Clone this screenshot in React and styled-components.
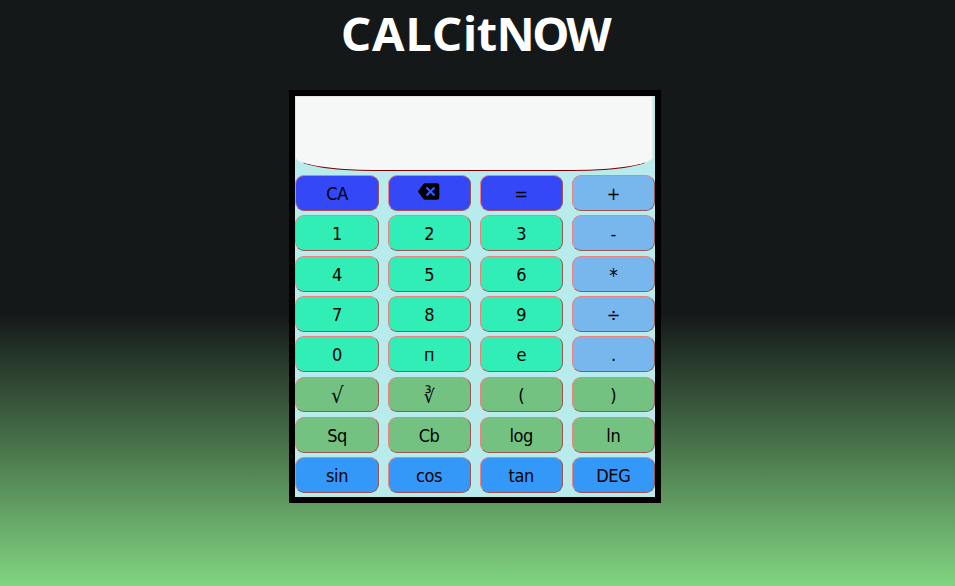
import React from "react";
import styled, { createGlobalStyle } from "styled-components";

const GlobalStyle = createGlobalStyle`
  html { height: 100%; }
  body {
    margin: 0;
    height: 586px;
    overflow: hidden;
    background: linear-gradient(#141819 53.5%, #80d480);
  }
`;

const Page = styled.main`
  display: flex;
  flex-direction: column;
  align-items: center;
  width: 950px;
`;

const Title = styled.h1`
  margin: 0;
  height: 90px;
  box-sizing: border-box;
  padding-top: 1px;
  font: bold 47px/65px "Noto Sans", sans-serif;
  color: #fff;
`;

const TitlePart = styled.span`
  letter-spacing: ${(p) => p.$spacing}px;
`;

const Calculator = styled.section`
  box-sizing: border-box;
  width: 372px;
  height: 413px;
  border: 6px solid #000;
  background: #b8ecec;
`;

const Display = styled.div`
  box-sizing: border-box;
  width: 358px;
  height: 75px;
  border: 1px solid #e4e8e8;
  border-bottom-color: #800000;
  border-radius: 0 0 80px 80px / 0 0 14px 14px;
  background: #f5f8f7;
`;

const Keys = styled.div`
  display: grid;
  grid-template-columns: repeat(4, 83.2px);
  column-gap: 8.9px;
  grid-auto-rows: 35.8px;
  row-gap: 4.5px;
  padding: 4.15px 0 0 0.45px;
`;

const tones = {
  control: "#3448f8",
  number: "#31eeb7",
  operator: "#78b6ee",
  fn: "#74c282",
  trig: "#3498f8",
};

const Key = styled.button`
  display: flex;
  align-items: center;
  justify-content: center;
  box-sizing: border-box;
  padding: 2px 0 0;
  border: 1px outset #f08080;
  border-radius: 9px;
  background: ${(p) => tones[p.$tone]};
  font: ${(p) => p.$size || 18}px/22px "DejaVu Sans Condensed", "Noto Sans", sans-serif;
  letter-spacing: -0.4px;
  color: #000;
`;

const EraseIcon = styled.svg`
  display: block;
  width: 22px;
  height: 17px;
  margin-top: -5px;
`;

const Erase = () => (
  <EraseIcon viewBox="0 0 22 17" aria-label="Backspace">
    <path d="M7.1 .3H19a2.3 2.3 0 0 1 2.3 2.3v11.8a2.3 2.3 0 0 1-2.3 2.3H7.1a2.3 2.3 0 0 1-1.7-.7L.6 9.5a1.4 1.4 0 0 1 0-2L5.4 1a2.3 2.3 0 0 1 1.7-.7Z" />
    <path d="m8.5 4.5 8 8m0-8-8 8" fill="none" stroke="#3f58ff" strokeWidth="2.1" />
  </EraseIcon>
);

const symbolSizes = { "√": 22, "*": 19, "∛": 19 };

const keys = [
  ["CA", "control"], ["⌫", "control"], ["=", "control"], ["+", "operator"],
  ["1", "number"], ["2", "number"], ["3", "number"], ["-", "operator"],
  ["4", "number"], ["5", "number"], ["6", "number"], ["*", "operator"],
  ["7", "number"], ["8", "number"], ["9", "number"], ["÷", "operator"],
  ["0", "number"], ["п", "number"], ["e", "number"], [".", "operator"],
  ["√", "fn"], ["∛", "fn"], ["(", "fn"], [")", "fn"],
  ["Sq", "fn"], ["Cb", "fn"], ["log", "fn"], ["ln", "fn"],
  ["sin", "trig"], ["cos", "trig"], ["tan", "trig"], ["DEG", "trig"],
];

export default function App() {
  return (
    <>
      <GlobalStyle />
      <Page>
        <Title>
          <TitlePart $spacing={1}>CALC</TitlePart>
          <TitlePart $spacing={-0.5}>it</TitlePart>
          <TitlePart $spacing={-2.6}>NOW</TitlePart>
        </Title>
        <Calculator>
          <Display />
          <Keys>
            {keys.map(([label, tone]) => (
              <Key key={label} $tone={tone} $size={symbolSizes[label]}>
                {label === "⌫" ? <Erase /> : label}
              </Key>
            ))}
          </Keys>
        </Calculator>
      </Page>
    </>
  );
}
